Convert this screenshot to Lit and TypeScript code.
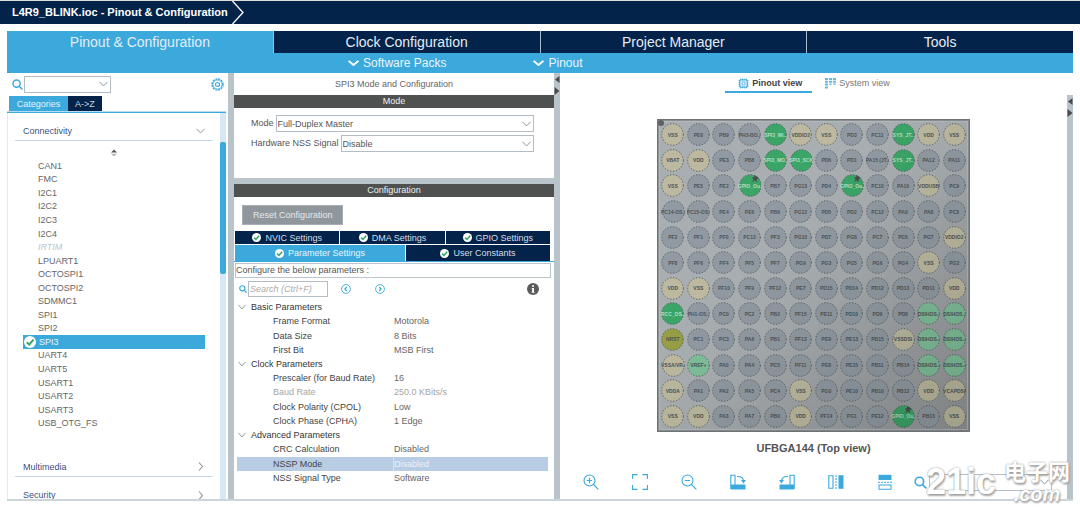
import { LitElement, html, css, svg, nothing } from "lit";
import { customElement, property, state } from "lit/decorators.js";
import { classMap } from "lit/directives/class-map.js";

const CHIP_ROWS: string[] = [
  "VSS PE0 PB9 PH3-BO.. SPI3_MI.. VDDIO2 VSS PD3 PC11 SYS_JT.. VDD VSS",
  "VBAT VDD PE3 PB8 SPI3_MO.. SPI3_SCK PD6 PD1 PA15_(JT.. SYS_JT.. PA12 PA11",
  "VSS PE5 PE2 GPIO_Ou.. PB7 PG13 PD4 GPIO_Ou.. PC10 PA10 VDDUSB PC9",
  "PC14-OS.. PC15-OS.. PE4 PE6 PB6 PG12 PD5 PD2 PC12 PA9 PA8 PC8",
  "PF2 PF1 PF0 PC13 PF3 PG10 PD7 PG8 PC7 PC6 PG7 VDDIO2",
  "PF8 PF6 PF4 PF5 PF7 PG9 PG3 PG5 PG6 PG4 VSS PG2",
  "VDD VSS PF10 PF9 PF12 PE7 PD15 PD14 PD12 PD13 PD11 VDD",
  "RCC_OS.. PH1-OS.. PC0 PC2 PB2 PF15 PE11 PD10 PD9 PD8 DSIHOS.. DSIHOS..",
  "NRST PC1 PC3 PA6 PB1 PF13 PE9 PE13 PB15 VSSDSI DSIHOS.. DSIHOS..",
  "VSSA/VR.. VREF+ PA0 PA4 PC5 PF11 PE8 PE15 PB11 PB14 DSIHOS.. DSIHOS..",
  "VDDA PA1 PA2 PA5 PC4 VSS PG0 PE10 PB10 PB12 VDD VCAPDSI",
  "VSS VDD PA3 PA7 PB0 VDD PF14 PG1 PE12 GPIO_Ou.. PB13 VSS",
];

function pinKind(name: string): string {
  if (/^(SPI3|SYS|GPIO|RCC)/.test(name)) return "used";
  if (/^(DSI|VREF)/.test(name)) return "bound";
  if (name === "NRST") return "reset";
  if (name.startsWith("V")) return "power";
  return "free";
}

const PERIPHERALS = [
  "CAN1", "FMC", "I2C1", "I2C2", "I2C3", "I2C4", "IRTIM", "LPUART1", "OCTOSPI1", "OCTOSPI2",
  "SDMMC1", "SPI1", "SPI2", "SPI3", "UART4", "UART5", "USART1", "USART2", "USART3", "USB_OTG_FS",
];

interface Param { name: string; value?: string; off?: boolean; }
const PARAMS: Param[] = [
  { name: "Basic Parameters" },
  { name: "Frame Format", value: "Motorola" },
  { name: "Data Size", value: "8 Bits" },
  { name: "First Bit", value: "MSB First" },
  { name: "Clock Parameters" },
  { name: "Prescaler (for Baud Rate)", value: "16" },
  { name: "Baud Rate", value: "250.0 KBits/s", off: true },
  { name: "Clock Polarity (CPOL)", value: "Low" },
  { name: "Clock Phase (CPHA)", value: "1 Edge" },
  { name: "Advanced Parameters" },
  { name: "CRC Calculation", value: "Disabled" },
  { name: "NSSP Mode", value: "Disabled" },
  { name: "NSS Signal Type", value: "Software" },
];

const shared = css`
  * { box-sizing: border-box; }
  button, input, select { font: inherit; color: inherit; margin: 0; border-radius: 0; }
  button { border: 0; padding: 0; background: none; cursor: pointer; }
  select { appearance: none; border: 1px solid #b4bdc3; background: #fff; padding: 0 1px; outline: none; }
  svg { display: block; flex: none; }
  .combo { display: grid; min-width: 0; }
  .combo > * { grid-area: 1 / 1; min-width: 0; }
  .combo > svg { justify-self: end; align-self: center; margin-right: 3px; pointer-events: none; }
`;

const chevronDown = (w = 9, color = "#8d979d", stroke = 1) => html`
  <svg width=${w} height="6" viewBox="0 0 9 6" preserveAspectRatio="none" fill="none" stroke=${color} stroke-width=${stroke}>
    <path d="M.5 .8 4.5 5 8.5 .8" />
  </svg>`;
const chevronRight = html`
  <svg width="9" height="9" viewBox="0 0 9 9" fill="none" stroke="#8d979d" stroke-width="1.1"><path d="M3 .5 6.5 4.5 3 8.5" /></svg>`;
const lens = (size: number, width = 1.6) => html`
  <svg width=${size} height=${size} viewBox="0 0 12 12" fill="none" stroke="#3ba9dc" stroke-width=${width}>
    <circle cx="5" cy="5" r="3.9" /><path d="M7.9 7.9 11.4 11.4" />
  </svg>`;
const check = (size: number) => html`
  <svg width=${size} height=${size} viewBox="0 0 12 12">
    <circle cx="6" cy="6" r="6" fill="#fff" /><path d="M2.8 6.2 5.2 8.6 9.5 3.6" fill="none" stroke="#35a566" stroke-width="2" />
  </svg>`;

@customElement("split-bar")
class SplitBar extends LitElement {
  @property({ type: Boolean }) arrows = false;
  static styles = css`
    :host { display: block; background: #b8c4ca; padding-top: 3px; }
    svg { display: block; margin-left: auto; }
  `;
  render() {
    return this.arrows
      ? html`<svg width="6" height="20" viewBox="0 0 6 20" fill="#4a4a4a"><path d="M5.5 0V7L1 3.5ZM.5 11V19L5.5 15Z" /></svg>`
      : nothing;
  }
}

@customElement("category-pane")
class CategoryPane extends LitElement {
  @state() selected = "SPI3";
  static styles = [shared, css`
    :host { display: flex; flex-direction: column; min-height: 0; color: #666; }
    .find { display: flex; align-items: center; height: 22px; padding: 0 4px 0 5px; gap: 1px; }
    .find .combo { width: 87px; height: 17px; }
    .gear { margin-left: auto; }
    .tabs { display: flex; padding: 1px 0 0 2px; height: 16px; }
    .tab { background: #3ba9dc; color: #e4f4fc; width: 59px; }
    .tab.dark { background: #03234b; color: #c8d4e0; width: 34px; }
    .rule { height: 2px; background: #3ba9dc; border-top: 1px solid #b5dcf2; margin-right: 2px; }
    .body { display: flex; flex: 1; min-height: 0; border-left: 1px solid #e8eaec; margin-right: 2px; }
    .content { flex: 1; display: flex; flex-direction: column; min-width: 0; overflow: hidden; padding: 0 7px; }
    .track { width: 6px; background: #d6e8f5; display: flex; flex-direction: column; padding-top: 29px; }
    .thumb { height: 37%; background: #3ba9dc; border-radius: 2px; }
    .section { display: flex; justify-content: space-between; align-items: center; width: 100%; flex: none;
      padding: 0 8px; color: #3c4f7e; border-bottom: 1px solid #ccd9e4; height: 20px; }
    .section.first { height: 28px; padding-top: 8px; }
    .section.cut { margin: 8px 0 -6px; border: 0; }
    .sort { align-self: center; margin: 8px 0 2px; }
    ul { list-style: none; margin: 0 8px 27px; padding: 0; flex: 1; display: grid; grid-auto-rows: 1fr; min-height: 0; }
    li { display: flex; min-height: 0; }
    .item { display: flex; align-items: center; flex: 1; padding-left: 15px; }
    .item.off { font-style: italic; color: #bcc4ca; }
    .item.on { background: #3ba9dc; color: #e8f6fd; padding-left: 1px; gap: 3px; }
  `];
  render() {
    return html`
      <div class="find">
        ${lens(11)}
        <div class="combo"><select aria-label="Search peripherals"><option></option></select>${chevronDown()}</div>
        <button class="gear" aria-label="Settings">
          <svg width="13" height="13" viewBox="0 0 13 13" fill="none" stroke="#3ba9dc">
            <circle cx="6.5" cy="6.5" r="5.5" stroke-width="1.4" stroke-dasharray="2 .88" />
            <circle cx="6.5" cy="6.5" r="4.5" stroke-width=".8" /><circle cx="6.5" cy="6.5" r="2" stroke-width="1.2" />
          </svg>
        </button>
      </div>
      <div class="tabs"><button class="tab">Categories</button><button class="tab dark">A-&gt;Z</button></div>
      <div class="rule"></div>
      <div class="body">
        <div class="content">
          <button class="section first">Connectivity ${chevronDown()}</button>
          <svg class="sort" width="6" height="8" viewBox="0 0 6 8"><path d="M0 3.5 3 .5 6 3.5Z" fill="#555" /><path d="M0 4.8H6L3 7.5Z" fill="#b5b5b5" /></svg>
          <ul>
            ${PERIPHERALS.map((p) => html`<li>
              <button class=${classMap({ item: true, off: p === "IRTIM", on: p === this.selected })}
                @click=${() => (this.selected = p)}>${p === this.selected ? check(12) : nothing}${p}</button></li>`)}
          </ul>
          <button class="section">Multimedia ${chevronRight}</button>
          <button class="section cut">Security ${chevronRight}</button>
        </div>
        <div class="track"><div class="thumb"></div></div>
      </div>`;
  }
}

@customElement("config-pane")
class ConfigPane extends LitElement {
  static styles = [shared, css`
    :host { display: flex; flex-direction: column; min-height: 0; color: #555; }
    .title { height: 22px; line-height: 22px; text-align: center; color: #666; }
    .bar { background: #4f5150; color: #eee; text-align: center; height: 13px; line-height: 13px; }
    .mode { padding: 7px 20px 27px 17px; display: grid; gap: 3px; border-bottom: 6px solid #b8c4ca; height: 76px; }
    .field { display: flex; gap: 2px; height: 17px; }
    .field label { line-height: 17px; }
    .field .combo { flex: 1; }
    .reset { background: #8f979d; border: 1px solid #a8afb4; color: #e6e8ea; align-self: flex-start; height: 20px; padding: 0 10px; margin: 8px 0 6px 8px; width: 101px; white-space: nowrap; }
    .tabs { display: grid; gap: 1px; margin: 0 4px 0 1px; }
    .upper { grid-template-columns: repeat(3, 1fr); height: 14px; padding-bottom: 1px; }
    .lower { grid-template-columns: 170fr 144fr; height: 16px; }
    .tab { display: flex; align-items: center; justify-content: center; gap: 4px; background: #03234b; color: #d5dde6; }
    .tab.on { background: #3ba9dc; color: #e8f6fd; }
    .rule { height: 1px; background: #3ba9dc; }
    .note { border: 1px solid #bcc5cb; margin: 1px 3px 0 1px; height: 15px; line-height: 13px; }
    .tools { display: flex; align-items: center; height: 22px; padding: 0 15px 0 5px; }
    .tools input { width: 80px; height: 16px; border: 1px solid #b4bdc3; padding: 0 1px; margin: 0 13px 0 1px; font-style: italic; outline: none; }
    .tools input::placeholder { color: #aaa; opacity: 1; }
    .prev { margin-right: 24px; }
    .info { margin-left: auto; }
    table { flex: 1; display: grid; grid-auto-rows: 1fr; margin: 0 6px 14px 3px; min-height: 0; }
    tbody { display: contents; }
    tr { display: grid; grid-template-columns: 156fr 155fr; align-items: stretch; }
    th, td { display: flex; align-items: center; padding: 0 0 0 1px; font-weight: 400; text-align: left; }
    th { color: #444; padding-left: 36px; }
    td { color: #666; }
    .group th { color: #333; padding-left: 1px; gap: 5px; }
    .off th, .off td { color: #a5a5a5; }
    .sel th { background: #b8cde4; }
    .sel td { background: #b8cde4; color: #eaf1f8; border-left: 1px solid #d5e2ef; padding-left: 0; }
  `];
  private tab(text: string, on = false) {
    return html`<button class=${classMap({ tab: true, on })}>${check(9)}${text}</button>`;
  }
  private round(d: string, cls: string, label: string) {
    return html`<button class=${cls} aria-label=${label}>
      <svg width="10" height="10" viewBox="0 0 10 10" fill="none" stroke="#3ba9dc"><circle cx="5" cy="5" r="4.4" stroke-width=".9" /><path d=${d} stroke-width="1.2" /></svg>
    </button>`;
  }
  render() {
    return html`
      <div class="title">SPI3 Mode and Configuration</div>
      <div class="bar">Mode</div>
      <div class="mode">
        <div class="field"><label for="mode">Mode</label>
          <div class="combo"><select id="mode"><option>Full-Duplex Master</option></select>${chevronDown()}</div></div>
        <div class="field"><label for="nss">Hardware NSS Signal</label>
          <div class="combo"><select id="nss"><option>Disable</option></select>${chevronDown()}</div></div>
      </div>
      <div class="bar">Configuration</div>
      <button class="reset">Reset Configuration</button>
      <div class="tabs upper">${this.tab("NVIC Settings")}${this.tab("DMA Settings")}${this.tab("GPIO Settings")}</div>
      <div class="tabs lower">${this.tab("Parameter Settings", true)}${this.tab("User Constants")}</div>
      <div class="rule"></div>
      <div class="note">Configure the below parameters :</div>
      <div class="tools">
        ${lens(8, 1.8)}
        <input type="text" aria-label="Search parameters" placeholder="Search (Ctrl+F)" />
        ${this.round("M5.8 3 3.9 5 5.8 7", "prev", "Previous")}
        ${this.round("M4.2 3 6.1 5 4.2 7", "next", "Next")}
        <svg class="info" width="12" height="12" viewBox="0 0 12 12"><circle cx="6" cy="6" r="6" fill="#5c5c5c" /><path d="M5 2.2H7V3.8H5ZM4.6 5H7V9H7.6V9.8H4.5V9H5.1V5.8H4.6Z" fill="#fff" /></svg>
      </div>
      <table><tbody>
        ${PARAMS.map((p) => html`
          <tr class=${classMap({ group: !p.value, off: !!p.off, sel: p.name === "NSSP Mode" })}>
            <th scope="row">${p.value ? nothing : chevronDown(8)}${p.name}</th>${p.value ? html`<td>${p.value}</td>` : nothing}
          </tr>`)}
      </tbody></table>`;
  }
}

@customElement("chip-view")
class ChipView extends LitElement {
  @property({ type: Array }) rows: string[] = CHIP_ROWS;
  static styles = css`
    * { box-sizing: border-box; }
    :host { display: block; position: relative; width: 313px; aspect-ratio: 1; border: 1px solid #6f7375;
      padding: 2px; background: linear-gradient(135deg, #a8aeb1, #a9aeb1 50%, #939697);
      box-shadow: inset 0 0 0 1px #8a8f91, inset 0 0 0 2px #b3b8ba; }
    .dot { position: absolute; left: 0; top: 0; width: 6px; height: 6px; border-radius: 50%; background: #5d6163; }
    .pins { display: grid; grid-template-columns: repeat(12, minmax(0, 1fr)); grid-auto-rows: minmax(0, 1fr); height: 100%; }
    .pin { display: grid; place-items: center; overflow: hidden; position: relative; margin: 0 1px; }
    .pin > * { grid-area: 1 / 1; }
    svg { display: block; }
    .disc { stroke: #5a6063; stroke-width: 1; stroke-dasharray: 1.4 1.6; }
    .free .disc { fill: #919aa2; }
    .power .disc { fill: #bcb9a0; }
    .used .disc { fill: #3aa566; }
    .bound .disc { fill: #7fbf9a; }
    .reset .disc { fill: #979f45; }
    .name { font-size: 5px; line-height: 6px; font-weight: 700; color: #4f5458; white-space: nowrap; }
    .used .name { color: #b5dcc4; }
    .shade { position: absolute; inset: 0; background: linear-gradient(135deg, transparent 35%, rgba(0, 0, 0, .14)); pointer-events: none; }
  `;
  render() {
    return html`
      <div class="pins">
        ${this.rows.flatMap((r) => r.split(" ")).map((n) => html`
          <div class="pin ${pinKind(n)}">
            <svg width="23" height="23" viewBox="0 0 23 23">
              <circle class="disc" cx="11.5" cy="11.5" r="10.8" />
              ${n.startsWith("GPIO") ? svg`<path d="M15.5 1 20 4 18 5 17.5 8 15.5 6.5 12.5 8.5 14.5 5.5 13 3.5 15 3Z" fill="#4a4f52" />` : nothing}
            </svg>
            <span class="name">${n.replace("_(", " (")}</span>
          </div>`)}
      </div>
      <div class="shade"></div>
      <div class="dot"></div>`;
  }
}

@customElement("pinout-pane")
class PinoutPane extends LitElement {
  static styles = [shared, css`
    :host { display: flex; flex-direction: column; align-items: center; min-width: 0; color: #777; }
    .views { display: flex; height: 20px; margin-bottom: 26px; }
    .view { display: flex; align-items: center; gap: 3px; padding: 2px 12px 0 13px; border-bottom: 2px solid transparent; white-space: nowrap; }
    .view.on { color: #444; font-weight: 700; border-color: #3ba9dc; padding-right: 10px; }
    .name { font-size: 11px; font-weight: 700; color: #555; line-height: 14px; margin-top: 9px; }
    .tools { display: flex; align-items: center; align-self: stretch; margin-top: auto; padding: 0 15px 8px 23px; height: 26px; }
    .icons { display: flex; gap: 33px; margin-right: 21px; }
    .tools .combo { flex: 1; height: 17px; margin-left: 2px; }
  `];
  private icon(label: string, body: unknown) {
    return html`<button aria-label=${label}><svg width="16" height="16" viewBox="0 0 16 16" fill="none" stroke="#3ba9dc" stroke-width="1.1">${body}</svg></button>`;
  }
  render() {
    const blue = "#3ba9dc";
    return html`
      <div class="views">
        <button class="view on">
          <svg width="11" height="11" viewBox="0 0 11 11" fill="none" stroke=${blue}>
            <path d="M2.5 .5V10.5M4.5 .5V10.5M6.5 .5V10.5M8.5 .5V10.5M.5 2.5H10.5M.5 4.5H10.5M.5 6.5H10.5M.5 8.5H10.5" stroke-width=".7" /><rect x="1.8" y="1.8" width="7.4" height="7.4" rx="1" fill="#fff" stroke-width="1.2" /><rect x="4" y="4" width="3" height="3" stroke-width=".8" />
          </svg>Pinout view</button>
        <button class="view">
          <svg width="11" height="11" viewBox="0 0 11 11" fill=${blue}>
            <path d="M0 0H3V2H0ZM4 0H7V2H4ZM8 0H11V2H8ZM0 2.8H3V4.8H0ZM4 2.8H7V4.8H4ZM8 2.8H11V4.8H8ZM0 5.6H3V7.6H0ZM8.5 5.6H10.5V7H8.5ZM4.5 5.6H6.5V7H4.5ZM0 8.4H3V10.6H0Z" opacity=".8" />
          </svg>System view</button>
      </div>
      <chip-view></chip-view>
      <div class="name">UFBGA144 (Top view)</div>
      <div class="tools">
        <div class="icons">
          ${this.icon("Zoom in", svg`<circle cx="6.5" cy="6.5" r="5.5" /><path d="M10.5 10.5 15.3 15.3M3.8 6.5H9.2M6.5 3.8V9.2" />`)}
          ${this.icon("Fit", svg`<path d="M.6 5V.6H5.5M10.5 .6H15.4V5M15.4 11V15.4H10.5M5.5 15.4H.6V11" />`)}
          ${this.icon("Zoom out", svg`<circle cx="6.5" cy="6.5" r="5.5" /><path d="M10.5 10.5 15.3 15.3M3.8 6.5H9.2" />`)}
          ${this.icon("Rotate right", svg`<path d="M.8 15V1.2H5V11" /><path d="M1 10.5H15.5V15.5H1Z" fill=${blue} stroke="none" /><path d="M7 2.5Q13 2 13.5 7" /><path d="M11 6H16L13.5 9.5Z" fill=${blue} stroke="none" />`)}
          ${this.icon("Rotate left", svg`<path d="M15.2 15V1.2H11V11" /><path d="M.5 10.5H15V15.5H.5Z" fill=${blue} stroke="none" /><path d="M9 2.5Q3 2 2.5 7" /><path d="M0 6H5L2.5 9.5Z" fill=${blue} stroke="none" />`)}
          ${this.icon("Flip horizontal", svg`<path d="M.8 1.7H5V14.3H.8Z" /><path d="M8 1V15" stroke-dasharray="2 1" /><path d="M10.5 1.2H15.5V14.8H10.5Z" fill=${blue} stroke="none" />`)}
          ${this.icon("Flip vertical", svg`<path d="M1.5 .8H14.5V6H1.5Z" fill=${blue} stroke="none" /><path d="M1 8.3H15" stroke-dasharray="2 1" /><path d="M2 11H14V15.2H2Z" />`)}
        </div>
        ${lens(13, 1.5)}
        <div class="combo"><select aria-label="Search pins"><option></option></select>${chevronDown()}</div>
      </div>`;
  }
}

@customElement("app-root")
class AppRoot extends LitElement {
  static styles = [shared, css`
    :host { display: flex; flex-direction: column; min-height: 100vh; position: relative; background: #fff; overflow: hidden;
      font: 9px/12px "Liberation Sans", Arial, sans-serif; }
    header { display: flex; background: #03234b; color: #fff; border-top: 1px solid #dfe0dc; height: 24px; font-size: 11px; font-weight: 700; line-height: 23px; padding-left: 12px; gap: 4px; }
    .frame { margin: 7px 7px 0; flex: 1; display: flex; flex-direction: column; padding-bottom: 7px; }
    nav { display: grid; grid-template-columns: repeat(4, minmax(0, 1fr)); font-size: 14px; line-height: 22px; background: #a9b9c8; gap: 1px; }
    .main { background: #03234b; color: #e6ecf2; }
    .main.on { background: #3ba9dc; }
    .menus { display: flex; gap: 87px; background: #3ba9dc; color: #fff; font-size: 12px; line-height: 20px; padding-left: 32%; }
    .menu { display: flex; align-items: center; gap: 4px; color: #eaf6fc; }
    .panes { flex: 1; display: grid; grid-template-columns: minmax(0, 221fr) 6px minmax(0, 320fr) 6px minmax(0, 507fr) 6px; border-bottom: 2px solid #ccd5da; }
    .late { margin-top: 22px; }
    .mark { position: absolute; right: 10px; bottom: 2px; display: flex; align-items: center; gap: 8px; color: #fff; font-weight: 700; pointer-events: none;
      text-shadow: 0 0 2px #8a8a8a, 1px 2px 2px #aaa; }
    .big { font-size: 36px; line-height: 42px; }
    .cn { font: 700 22px/24px "Noto Sans CJK SC", sans-serif; }
    .com { font-size: 20px; line-height: 24px; font-style: italic; text-align: center; }
  `];
  render() {
    return html`
      <header>L4R9_BLINK.ioc - Pinout &amp; Configuration
        <svg width="12" height="23" viewBox="0 0 12 23" fill="none" stroke="#fff" stroke-width="1.3"><path d="M.5 0 11 11.5 .5 23" /></svg>
      </header>
      <div class="frame">
        <nav>
          <button class="main on">Pinout &amp; Configuration</button>
          <button class="main">Clock Configuration</button>
          <button class="main">Project Manager</button>
          <button class="main">Tools</button>
        </nav>
        <div class="menus">
          <button class="menu">${chevronDown(11, "#fff", 1.8)}Software Packs</button>
          <button class="menu">${chevronDown(11, "#fff", 1.8)}Pinout</button>
        </div>
        <div class="panes">
          <category-pane></category-pane>
          <split-bar></split-bar>
          <config-pane></config-pane>
          <split-bar arrows></split-bar>
          <pinout-pane></pinout-pane>
          <split-bar class="late" arrows></split-bar>
        </div>
      </div>
      <div class="mark"><div class="big">21ic</div><div><div class="cn">电子网</div><div class="com">.com</div></div></div>`;
  }
}
